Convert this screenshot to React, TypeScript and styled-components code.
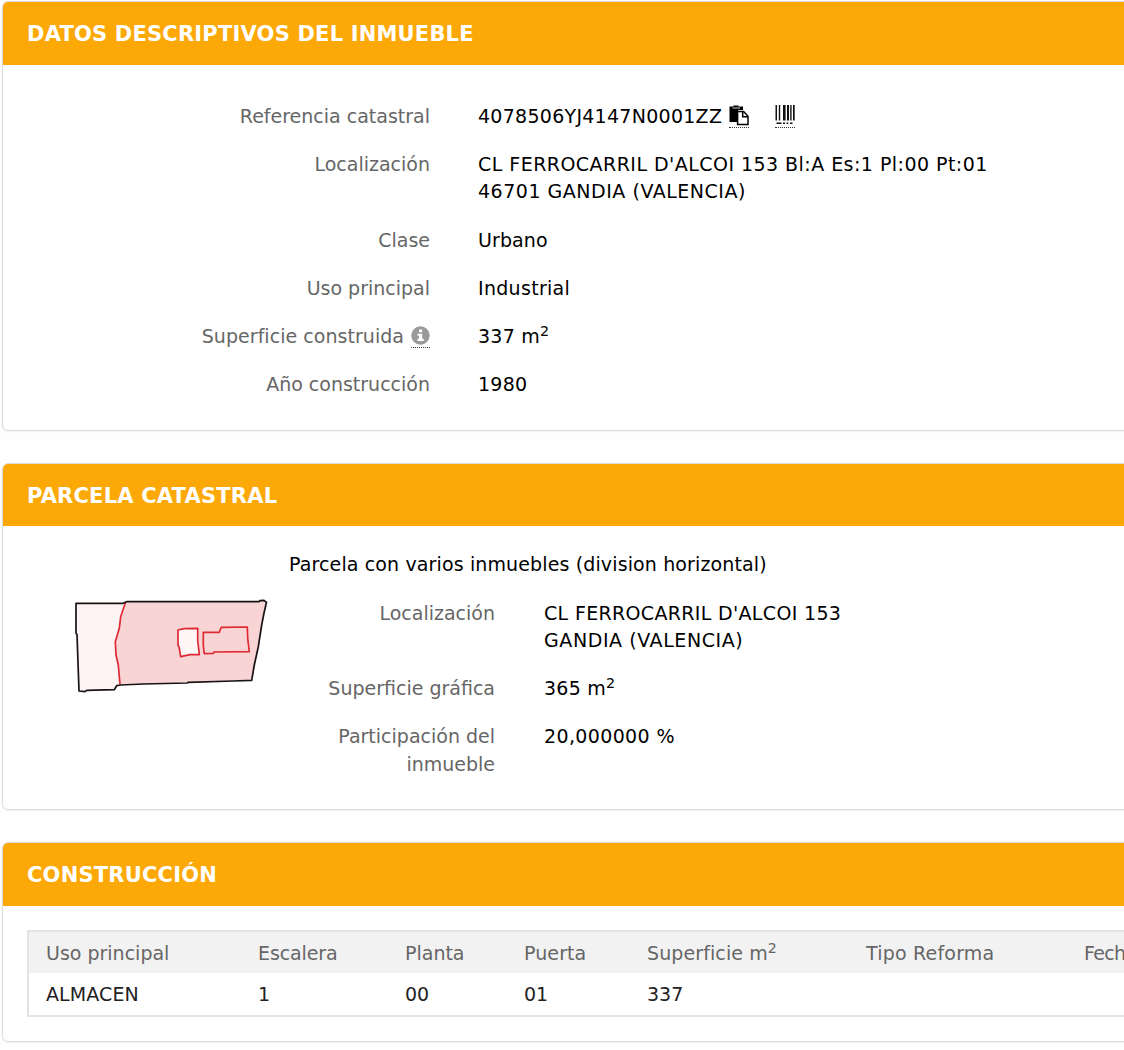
import React from "react";
import styled, { createGlobalStyle } from "styled-components";

const GlobalStyle = createGlobalStyle`
  html, body { margin: 0; background: #fff; overflow: hidden; }
  * { box-sizing: border-box; }
`;

const Page = styled.main`
  width: 1124px;
  height: 1050px;
  overflow: hidden;
  padding: 1px 0 0 2px;
  background: #fefefe;
  color: #000;
  font: 19px/27.5px Verdana, "DejaVu Sans", sans-serif;
`;

const Panel = styled.section<{ $height: number; $gap: number }>`
  width: 1180px;
  height: ${(p) => p.$height}px;
  margin-bottom: ${(p) => p.$gap}px;
  border: 1px solid #dcdcdc;
  border-radius: 6px;
  background: #fff;
  box-shadow: 0 1px 2px rgba(0, 0, 0, 0.06);
  overflow: hidden;
`;

const PanelTitle = styled.h2<{ $height: number }>`
  display: flex;
  align-items: center;
  height: ${(p) => p.$height}px;
  margin: 0;
  padding: 3px 24px 0;
  background: #fca907;
  color: #fff;
  font-size: 21px;
  font-weight: 700;
  letter-spacing: 0.2px;
`;

const Fields = styled.div<{ $label: number; $gap: number }>`
  display: grid;
  grid-template-columns: ${(p) => p.$label}px 1fr;
  column-gap: ${(p) => p.$gap}px;
  row-gap: 20.6px;
`;

const MainFields = styled(Fields)`
  padding-top: 38.3px;
  row-gap: 21.2px;
  line-height: 27px;
`;

const Label = styled.div`
  color: #666;
  text-align: right;
  white-space: nowrap;
`;

const Value = styled.div`
  white-space: nowrap;
  letter-spacing: 0.25px;
`;

const Text = styled.span<{ $track?: number }>`
  letter-spacing: ${(p) => p.$track ?? 0}px;
`;

const Sup = styled.sup`
  font-size: 75%;
  line-height: 0;
  vertical-align: baseline;
  position: relative;
  top: -0.5em;
`;

const IconMark = styled.span<{ $width: number; $left: number }>`
  display: inline-block;
  width: ${(p) => p.$width}px;
  height: 24px;
  margin-top: -6px;
  margin-left: ${(p) => p.$left}px;
  border-bottom: 1px dotted #333;
  line-height: 0;
  vertical-align: -3px;
`;

const ParcelBody = styled.div`
  display: flex;
  padding-top: 25px;
`;

const ParcelMap = styled.svg`
  flex: none;
  width: 200px;
  height: 100px;
  margin: 45px 16px 0 70px;
`;

const ParcelInfo = styled.div`
  flex: 1;
`;

const ParcelType = styled.p`
  margin: 0 0 21px;
  white-space: nowrap;
  letter-spacing: 0.13px;
`;

const Table = styled.div`
  margin: 24px 0 0 24px;
  border: 2px solid #e3e3e3;
`;

const Row = styled.div<{ $head?: boolean }>`
  display: grid;
  grid-template-columns: 212px 147px 119px 123px 219px 218px 1fr;
  align-items: center;
  height: ${(p) => (p.$head ? 41 : 42)}px;
  padding: 2px 0 0 17px;
  background: ${(p) => (p.$head ? "#f2f2f2" : "#fff")};
  color: ${(p) => (p.$head ? "#666" : "#222")};
  white-space: nowrap;
`;

const PasteIcon = () => (
  <svg width="20" height="22" viewBox="0 0 20 22">
    <path d="M.5 2.500H4.500V1.500h5v1H14V6H9v12H.5z" fill="#000" />
    <path d="M3.500 4h7.500" stroke="#ccc" strokeWidth="1.200" />
    <path d="M8.600 7.600h6l4.400 4.600v8.200H8.600z" fill="#fff" stroke="#000" strokeWidth="1.500" />
    <path d="M13.700 7.500v5.200h5.500" fill="none" stroke="#000" strokeWidth="1.500" />
  </svg>
);

const BarcodeIcon = () => (
  <svg width="20" height="22" viewBox="0 0 20 22">
    <path
      d="M.5 1H2v15.500H.5zM3.800 1h1.400v15.500H3.800zM8 1h2.600v15.500H8zM12 1h2v15.500h-2zM15.200 1h1.400v15.500h-1.400zM18 1h1.700v15.500H18z"
      fill="#111"
    />
    <path d="M1.500 19.200h5M8 19.200h2M11.500 19.200h1.800M15 19.200h2.500" stroke="#111" strokeWidth="1.600" />
  </svg>
);

const InfoIcon = () => (
  <svg width="19" height="22" viewBox="0 0 19 22">
    <circle cx="9.5" cy="11.5" r="9.2" fill="#999" />
    <path d="M8 5.500h3.200v2.700H8zM6.500 9.700h4.700v5.100h1.500v2.100H6.500v-2.100H8v-3H6.500z" fill="#fff" />
  </svg>
);

const ParcelDrawing = () => (
  <ParcelMap viewBox="0 0 200 100">
    <path
      d="M3 7.300L50 7.300L53.700 5.700L48 21L46 32L42.300 46L43 59L45.300 69L47 89L43.700 89.700L41.300 93.700L13.700 94.300L12 95.700L6 95L4 38.500L3 37.300z"
      fill="#fff4f4"
    />
    <path
      d="M53.700 5.700L186 5.700L191 4.300L193 6.300L188.700 29L185.300 50.700L181.300 69L178.700 84.300L115.300 86.300L70.300 88L47.700 89L45.300 69L43 59L42.300 46L46 32L48 21z"
      fill="#f9d4d4"
    />
    <path
      d="M105 34L111 32.700L124.700 32.300V44L126.300 58.700H117L107.700 60.700L106 50.700L105 49.500z"
      fill="#fff6f6"
    />
    <g fill="none" strokeWidth="1.7" strokeLinejoin="round">
      <path
        d="M52.500 6.500L47.700 20.700L46.300 32.300L42.300 45.700L43 59L45.300 69L47 88.300M105 34L111 32.700L124.700 32.300V44L126.300 58.700H117L107.700 60.700L106 50.700L105 49.500zM130.300 36.300H146.300L148.300 31.300L174.300 31L174.700 42.300L176.300 55.700L141 56L140.300 57.300L131.300 57.700L130.300 50z"
        stroke="#df2935"
      />
      <path
        d="M3 7.300L50 7.300L53.700 5.700L186 5.700L187 4.700L191 4.300L193.500 6.300L191 17L188.700 29L185.300 50.700L181.300 69L178.700 84.300L160 85L115.300 86.300L114 87L70.300 88L47.700 89L43.700 89.700L41.300 93.700L13.700 94.300L12 95.700L6 95L4 38.500L3 37.300z"
        stroke="#171314"
      />
    </g>
  </ParcelMap>
);

const MAIN_FIELDS: { label: React.ReactNode; value: React.ReactNode }[] = [
  {
    label: "Referencia catastral",
    value: (
      <>
        <Text $track={0.27}>4078506YJ4147N0001ZZ</Text>
        <IconMark $width={20} $left={7}><PasteIcon /></IconMark>
        <IconMark $width={20} $left={26}><BarcodeIcon /></IconMark>
      </>
    ),
  },
  {
    label: "Localización",
    value: (
      <>
        <Text $track={0.46}>CL FERROCARRIL D'ALCOI 153 Bl:A Es:1 Pl:00 Pt:01</Text>
        <br />
        <Text $track={0.52}>46701 GANDIA (VALENCIA)</Text>
      </>
    ),
  },
  { label: "Clase", value: <Text $track={0.1}>Urbano</Text> },
  { label: "Uso principal", value: <Text $track={0.3}>Industrial</Text> },
  {
    label: (
      <>
        <Text $track={0.04}>Superficie construida</Text>
        <IconMark $width={19} $left={7}><InfoIcon /></IconMark>
      </>
    ),
    value: <>337 m<Sup>2</Sup></>,
  },
  { label: "Año construcción", value: "1980" },
];

export default function App() {
  return (
    <>
      <GlobalStyle />
      <Page>
        <Panel $height={430} $gap={32}>
          <PanelTitle $height={63}>DATOS DESCRIPTIVOS DEL INMUEBLE</PanelTitle>
          <MainFields $label={427} $gap={48}>
            {MAIN_FIELDS.map((field, i) => (
              <React.Fragment key={i}>
                <Label>{field.label}</Label>
                <Value>{field.value}</Value>
              </React.Fragment>
            ))}
          </MainFields>
        </Panel>

        <Panel $height={347} $gap={32}>
          <PanelTitle $height={62}>PARCELA CATASTRAL</PanelTitle>
          <ParcelBody>
            <ParcelDrawing />
            <ParcelInfo>
              <ParcelType>Parcela con varios inmuebles (division horizontal)</ParcelType>
              <Fields $label={206} $gap={49}>
                <Label>Localización</Label>
                <Value>
                  <Text $track={0.33}>CL FERROCARRIL D'ALCOI 153</Text>
                  <br />
                  <Text $track={0.58}>GANDIA (VALENCIA)</Text>
                </Value>
                <Label>Superficie gráfica</Label>
                <Value>365 m<Sup>2</Sup></Value>
                <Label>Participación del<br />inmueble</Label>
                <Value><Text $track={0.36}>20,000000 %</Text></Value>
              </Fields>
            </ParcelInfo>
          </ParcelBody>
        </Panel>

        <Panel $height={200} $gap={0}>
          <PanelTitle $height={63}>CONSTRUCCIÓN</PanelTitle>
          <Table>
            <Row $head>
              <Text>Uso principal</Text>
              <Text $track={-0.1}>Escalera</Text>
              <Text>Planta</Text>
              <Text $track={0.1}>Puerta</Text>
              <Text $track={0.1}>Superficie m<Sup>2</Sup></Text>
              <Text $track={0.2}>Tipo Reforma</Text>
              <Text $track={-0.7}>Fech</Text>
            </Row>
            <Row>
              <Text $track={0.1}>ALMACEN</Text>
              <Text>1</Text>
              <Text>00</Text>
              <Text>01</Text>
              <Text>337</Text>
            </Row>
          </Table>
        </Panel>
      </Page>
    </>
  );
}
